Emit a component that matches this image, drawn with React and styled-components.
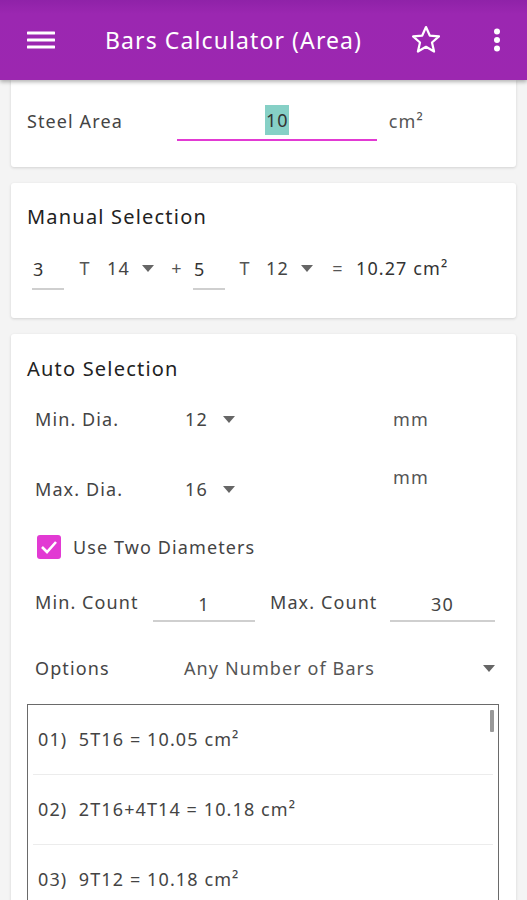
import styled, { createGlobalStyle } from "styled-components";

const GlobalStyle = createGlobalStyle`
  html, body {
    margin: 0;
    padding: 0;
    background: #f4f4f4;
    font-family: "Noto Sans", "Open Sans", sans-serif;
    font-size: 18px;
    letter-spacing: 1.1px;
    color: #3a3a3a;
  }
  * { box-sizing: border-box; }
`;

const results = [
  "01)  5T16 = 10.05 cm²",
  "02)  2T16+4T14 = 10.18 cm²",
  "03)  9T12 = 10.18 cm²",
];

function Caret() {
  return (
    <svg width="12" height="7" viewBox="0 0 12 7">
      <path d="M0 0h12L6 7z" fill="#666" />
    </svg>
  );
}

export default function App() {
  return (
    <Screen>
      <GlobalStyle />
      <AppBar>
        <IconButton>
          <svg width="28" height="18" viewBox="0 0 28 18">
            <path d="M1 2h26M1 9h26M1 16h26" stroke="#fff" strokeWidth="3" strokeLinecap="round" />
          </svg>
        </IconButton>
        <Title>Bars Calculator (Area)</Title>
        <IconButton>
          <svg width="34" height="32" viewBox="0 0 24 23">
            <path
              d="M12 2.2l2.7 6.1 6.6.6-5 4.4 1.5 6.5L12 16.4l-5.8 3.4 1.5-6.5-5-4.4 6.6-.6z"
              fill="none"
              stroke="#fff"
              strokeWidth="1.6"
              strokeLinejoin="round"
            />
          </svg>
        </IconButton>
        <IconButton $narrow>
          <svg width="8" height="24" viewBox="0 0 8 24">
            <circle cx="4" cy="3.5" r="3" fill="#fff" />
            <circle cx="4" cy="12" r="3" fill="#fff" />
            <circle cx="4" cy="20.5" r="3" fill="#fff" />
          </svg>
        </IconButton>
      </AppBar>

      <Content>
        <Card $clipped>
          <InputRow>
            <Label>Steel Area</Label>
            <AreaField>
              <Selected>10</Selected>
            </AreaField>
            <Unit>cm²</Unit>
          </InputRow>
        </Card>

        <Card>
          <CardTitle>Manual Selection</CardTitle>
          <ManualRow>
            <SmallField>3</SmallField>
            <Sym $w={42}>T</Sym>
            <Picker $w={55} $gap={12}>
              <span>14</span>
              <Caret />
            </Picker>
            <Sym $w={32}>+</Sym>
            <SmallField>5</SmallField>
            <Sym $w={40}>T</Sym>
            <Picker $w={57} $gap={12}>
              <span>12</span>
              <Caret />
            </Picker>
            <Sym $w={32}>=</Sym>
            <Value>10.27 cm²</Value>
          </ManualRow>
        </Card>

        <Card $last>
          <CardTitle $tight>Auto Selection</CardTitle>
          <DiaRow>
            <Label>Min. Dia.</Label>
            <Picker $w={60} $gap={15}>
              <span>12</span>
              <Caret />
            </Picker>
            <Unit $col>mm</Unit>
          </DiaRow>
          <DiaRow>
            <Label>Max. Dia.</Label>
            <Picker $w={60} $gap={15}>
              <span>16</span>
              <Caret />
            </Picker>
            <Unit $col $raise>mm</Unit>
          </DiaRow>
          <CheckRow>
            <CheckBox>
              <svg width="18" height="14" viewBox="0 0 18 14">
                <path d="M2 7l5 5L16 2" fill="none" stroke="#fff" strokeWidth="2.6" />
              </svg>
            </CheckBox>
            <Label>Use Two Diameters</Label>
          </CheckRow>
          <CountRow>
            <Label>Min. Count</Label>
            <CountField>1</CountField>
            <Label>Max. Count</Label>
            <CountField>30</CountField>
          </CountRow>
          <OptionsRow>
            <Label>Options</Label>
            <OptionValue>Any Number of Bars</OptionValue>
            <Caret />
          </OptionsRow>
          <ResultList>
            <ScrollThumb />
            {results.map((r) => (
              <ResultItem key={r}>{r}</ResultItem>
            ))}
          </ResultList>
        </Card>
      </Content>
    </Screen>
  );
}

const Screen = styled.div`
  width: 527px;
  height: 900px;
  overflow: hidden;
  background: #f4f4f4;
`;

const AppBar = styled.header`
  position: relative;
  z-index: 2;
  height: 80px;
  display: flex;
  align-items: center;
  padding: 0 20px 0 27px;
  background: linear-gradient(#8f22a8 0, #9b27b1 14px, #9c27b0 100%);
  box-shadow: 0 2px 4px rgba(0, 0, 0, 0.3);
`;

const IconButton = styled.div`
  display: flex;
  align-items: center;
  justify-content: center;
  width: ${(p) => (p.$narrow ? "20px" : "auto")};
  margin-left: ${(p) => (p.$narrow ? "44px" : "0")};
`;

const Title = styled.h1`
  flex: 1;
  margin: 0 0 0 50px;
  font-size: 23px;
  font-weight: 400;
  color: #fff;
  letter-spacing: 1.1px;
`;

const Content = styled.main`
  display: flex;
  flex-direction: column;
  gap: 16px;
  padding: 0 11px;
`;

const Card = styled.section`
  background: #fff;
  border-radius: ${(p) => (p.$clipped ? "0 0 3px 3px" : "3px")};
  box-shadow: 0 1px 3px rgba(0, 0, 0, 0.14);
  padding: ${(p) => (p.$clipped ? "0 16px" : p.$last ? "13px 16px 0" : "20px 16px 0")};
  height: ${(p) => (p.$clipped ? "87px" : p.$last ? "600px" : "135px")};
`;

const CardTitle = styled.h2`
  margin: 0;
  height: ${(p) => (p.$tight ? "37px" : "32px")};
  padding-top: ${(p) => (p.$tight ? "8px" : "0")};
  font-size: 20px;
  font-weight: 400;
  letter-spacing: 1.2px;
  color: #222;
`;

const Label = styled.span`
  color: #444;
  white-space: nowrap;
`;

const Unit = styled.span`
  color: #555;
  margin-left: ${(p) => (p.$col ? "auto" : "0")};
  width: ${(p) => (p.$col ? "107px" : "auto")};
  position: relative;
  top: ${(p) => (p.$raise ? "-12px" : "0")};
`;

const InputRow = styled.div`
  display: flex;
  align-items: center;
  height: 82px;
`;

const AreaField = styled.div`
  width: 200px;
  height: 36px;
  margin: 4px 12px 0 54px;
  display: flex;
  justify-content: center;
  align-items: flex-start;
  border-bottom: 2px solid #e23ad3;
`;

const Selected = styled.span`
  background: #86d0c6;
  line-height: 30px;
  padding: 0 0 0 1px;
  color: #333;
`;

const ManualRow = styled.div`
  display: flex;
  align-items: center;
  height: 66px;
  padding-left: 5px;
`;

const SmallField = styled.div`
  width: 32px;
  height: 36px;
  padding: 3px 0 0 1px;
  margin-bottom: -8px;
  color: #333;
  border-bottom: 2px solid #cfcfcf;
`;

const Sym = styled.span`
  width: ${(p) => p.$w}px;
  text-align: center;
  color: #555;
`;

const Picker = styled.div`
  width: ${(p) => p.$w}px;
  display: flex;
  align-items: center;
  gap: ${(p) => p.$gap}px;
  padding-left: 1px;
  color: #444;
`;

const Value = styled.span`
  color: #333;
  margin-left: 2px;
`;

const DiaRow = styled.div`
  display: flex;
  align-items: center;
  height: 70px;
  padding-left: 8px;

  ${Label} {
    width: 149px;
  }
`;

const CheckRow = styled.div`
  display: flex;
  align-items: center;
  gap: 12px;
  height: 46px;
  padding-left: 10px;
`;

const CheckBox = styled.div`
  width: 24px;
  height: 24px;
  border-radius: 3px;
  background: #e23ad3;
  display: flex;
  align-items: center;
  justify-content: center;
`;

const CountRow = styled.div`
  display: grid;
  grid-template-columns: 118px 102px 135px 105px;
  align-items: center;
  height: 62px;
  padding-left: 8px;
  padding-top: 2px;

  ${Label}:nth-of-type(2) {
    padding-left: 15px;
  }
`;

const CountField = styled.div`
  height: 34px;
  padding-top: 4px;
  margin-top: 6px;
  text-align: center;
  color: #444;
  border-bottom: 2px solid #cfcfcf;
`;

const OptionsRow = styled.div`
  display: flex;
  align-items: center;
  height: 72px;
  padding: 0 5px 0 8px;

  ${Label} {
    width: 149px;
  }
`;

const OptionValue = styled.span`
  flex: 1;
  color: #555;
`;

const ResultList = styled.div`
  position: relative;
  width: 472px;
  height: 220px;
  border: 1.5px solid #6a6a6a;
  padding: 0 5px;
  overflow: hidden;
`;

const ScrollThumb = styled.div`
  position: absolute;
  top: 5px;
  right: 4px;
  width: 4px;
  height: 22px;
  border-radius: 1px;
  background: #999;
`;

const ResultItem = styled.div`
  height: 70px;
  display: flex;
  align-items: center;
  padding: 0 0 2px 5px;
  white-space: pre;
  color: #444;
  border-bottom: 1px solid #ececec;
`;
